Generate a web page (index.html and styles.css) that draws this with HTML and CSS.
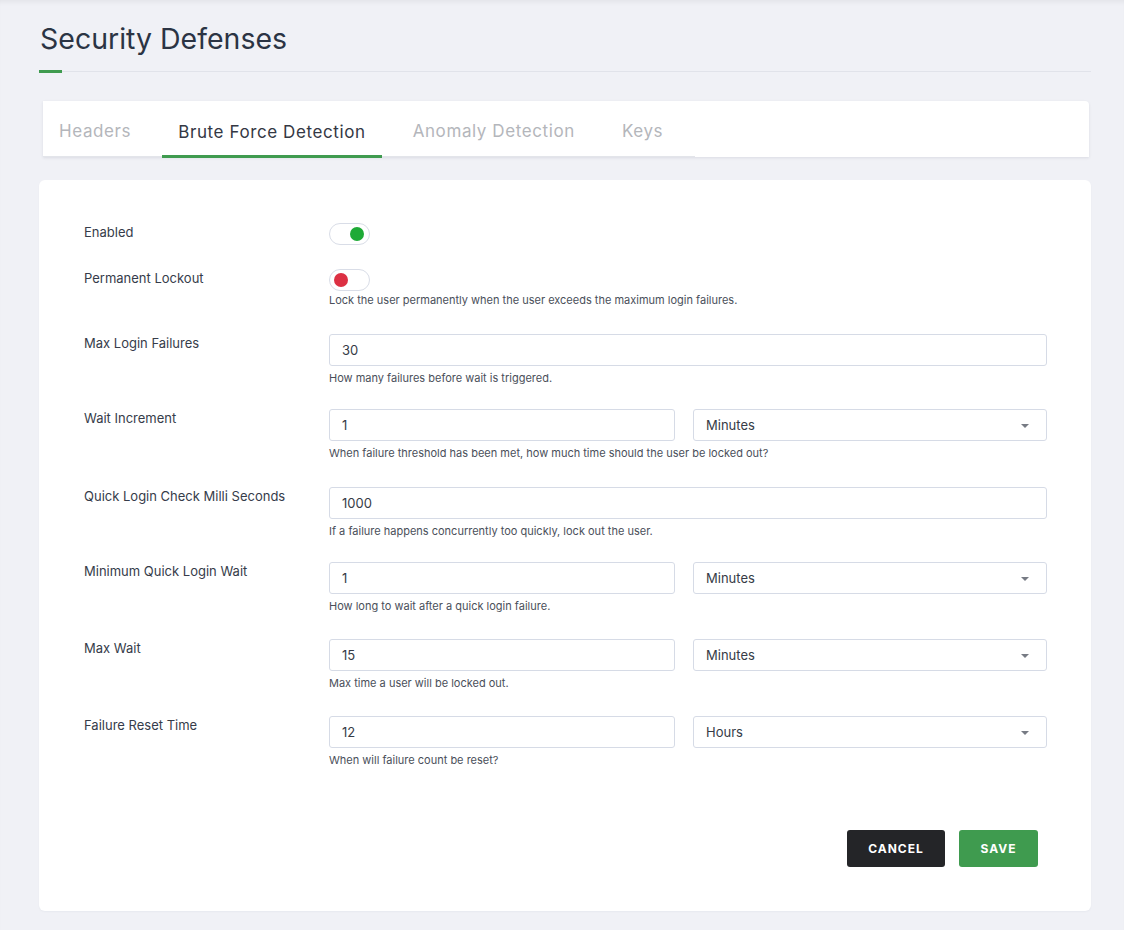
FILE: index.html
```html
<!DOCTYPE html>
<html>
<head>
<meta charset="utf-8">
<link rel="stylesheet" href="styles.css">
</head>
<body>
<div class="page">
  <h1 class="title">Security Defenses</h1>
  <div class="title-rule"><span class="title-accent"></span></div>

  <div class="tabs-card">
    <ul class="tabs">
      <li class="tab">Headers</li>
      <li class="tab active">Brute Force Detection</li>
      <li class="tab">Anomaly Detection</li>
      <li class="tab">Keys</li>
    </ul>
  </div>

  <div class="form-card">
    <div class="row r1">
      <div class="label">Enabled</div>
      <div class="ctrl"><span class="toggle on"><span class="knob"></span></span></div>
    </div>
    <div class="row r2">
      <div class="label">Permanent Lockout</div>
      <div class="ctrl">
        <span class="toggle off"><span class="knob"></span></span>
        <div class="help help-tight">Lock the user permanently when the user exceeds the maximum login failures.</div>
      </div>
    </div>
    <div class="row r3">
      <div class="label">Max Login Failures</div>
      <div class="ctrl">
        <div class="input">30</div>
        <div class="help">How many failures before wait is triggered.</div>
      </div>
    </div>
    <div class="row r4">
      <div class="label">Wait Increment</div>
      <div class="ctrl">
        <div class="pair"><div class="input half">1</div><div class="select">Minutes<span class="caret"></span></div></div>
        <div class="help">When failure threshold has been met, how much time should the user be locked out?</div>
      </div>
    </div>
    <div class="row r5">
      <div class="label">Quick Login Check Milli Seconds</div>
      <div class="ctrl">
        <div class="input">1000</div>
        <div class="help">If a failure happens concurrently too quickly, lock out the user.</div>
      </div>
    </div>
    <div class="row r6">
      <div class="label">Minimum Quick Login Wait</div>
      <div class="ctrl">
        <div class="pair"><div class="input half">1</div><div class="select">Minutes<span class="caret"></span></div></div>
        <div class="help">How long to wait after a quick login failure.</div>
      </div>
    </div>
    <div class="row r7">
      <div class="label">Max Wait</div>
      <div class="ctrl">
        <div class="pair"><div class="input half">15</div><div class="select">Minutes<span class="caret"></span></div></div>
        <div class="help">Max time a user will be locked out.</div>
      </div>
    </div>
    <div class="row last">
      <div class="label">Failure Reset Time</div>
      <div class="ctrl">
        <div class="pair"><div class="input half">12</div><div class="select">Hours<span class="caret"></span></div></div>
        <div class="help">When will failure count be reset?</div>
      </div>
    </div>
    <div class="actions">
      <button class="btn btn-cancel">CANCEL</button>
      <button class="btn btn-save">SAVE</button>
    </div>
  </div>
</div>
</body>
</html>
```

FILE: styles.css
```css
* { box-sizing: border-box; }
html, body { margin: 0; padding: 0; }
body {
  background: #f0f1f6;
  font-family: Inter, "Noto Sans", "Liberation Sans", sans-serif;
  color: #2d3343;
  box-shadow: inset 0 5px 5px -3px rgba(0,0,0,0.06);
  min-height: 930px;
}
.page {
  padding: 19px 33px 19px 39px;
}
.title {
  margin: 0 0 0 1px;
  font-size: 28.5px;
  font-weight: 400;
  line-height: 40px;
  color: #2b3444;
}
.title-rule {
  margin-top: 12px;
  height: 1px;
  background: #e1e3ea;
  position: relative;
}
.title-accent {
  position: absolute;
  left: 0;
  top: -1px;
  width: 23px;
  height: 3px;
  background: #3f9b4f;
}
.tabs-card {
  margin: 29px 2px 0 4px;
  height: 56px;
  background: #fff;
  border-radius: 0 4px 0 0;
  box-shadow: 0 1px 3px rgba(30,40,70,0.10);
}
.tabs {
  list-style: none;
  margin: 0;
  padding: 0;
  display: flex;
  height: 56px;
  width: max-content;
  border-bottom: 1px solid #e3e5ea;
}
.tab {
  padding: 7px 16px 0;
  margin-right: 15px;
  display: flex;
  align-items: center;
  font-size: 17px;
  letter-spacing: 0.6px;
  white-space: nowrap;
  color: #b4b6bb;
  height: 56px;
  border-bottom: 3px solid transparent;
}
.tab:last-child { margin-right: 16px; }
.tab.active {
  color: #343844;
  border-bottom-color: #3f9b4f;
  margin-bottom: -1px;
  height: 57px;
}
.form-card {
  margin-top: 23px;
  background: #fff;
  border-radius: 6px;
  padding: 43px 44px 44px 45px;
  box-shadow: 0 1px 2px rgba(30,40,70,0.04);
}
.row {
  display: grid;
  grid-template-columns: 245px 1fr;
  margin-bottom: 26px;
}
.row.r1 { margin-bottom: 24px; }
.row.r2 { margin-bottom: 27px; }
.row.r3, .row.r5 { margin-bottom: 24px; }
.row.r4 { margin-bottom: 27px; }
.row.last { margin-bottom: 0; }
.label {
  font-size: 13px;
  line-height: 18px;
  color: #363c4a;
}
.ctrl { display: flex; flex-direction: column; }
.toggle {
  display: block;
  width: 41px;
  height: 22px;
  border: 1px solid #d9dde7;
  border-radius: 11px;
  position: relative;
  background: #fff;
}
.knob {
  position: absolute;
  top: 3px;
  width: 14px;
  height: 14px;
  border-radius: 50%;
}
.toggle.on .knob { right: 5px; background: #1eaa36; }
.toggle.off .knob { left: 4px; background: #dc3043; }
.input, .select {
  height: 32px;
  border: 1px solid #d6dbe6;
  border-radius: 3px;
  padding: 0 12px;
  font-size: 13px;
  color: #363b46;
  display: flex;
  align-items: center;
  background: #fff;
}
.pair { display: flex; gap: 18px; }
.input.half { width: 346px; flex: none; }
.select { flex: 1; position: relative; }
.caret {
  position: absolute;
  right: 17px;
  top: 14px;
  width: 0;
  height: 0;
  border-left: 4px solid transparent;
  border-right: 4px solid transparent;
  border-top: 4px solid #777b84;
}
.help {
  margin-top: 5px;
  font-size: 11px;
  line-height: 14px;
  color: #4a4f5a;
}
.help.help-tight { margin-top: 2px; }
.actions {
  display: flex;
  justify-content: flex-end;
  gap: 14px;
  margin-top: 63px;
  padding-right: 9px;
}
.btn {
  height: 37px;
  border: none;
  border-radius: 3px;
  color: #fff;
  font-family: Inter, "Noto Sans", "Liberation Sans", sans-serif;
  font-weight: 700;
  font-size: 12px;
  letter-spacing: 1px;
}
.btn-cancel { width: 98px; background: #242528; }
.btn-save { width: 79px; background: #3f9b4f; }
```
